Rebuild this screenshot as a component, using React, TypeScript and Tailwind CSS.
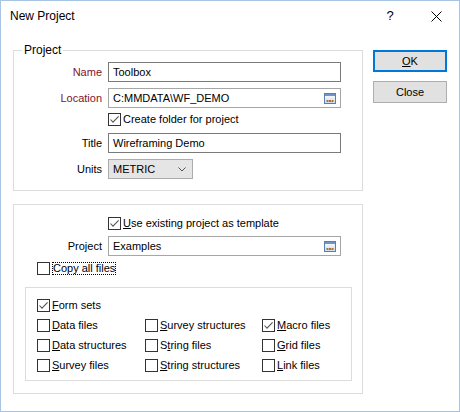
import type { ReactNode } from "react";

function CheckBox({ checked = false }: { checked?: boolean }) {
  return (
    <span className="flex h-[13px] w-[13px] shrink-0 items-center justify-center border border-[#333333] bg-white">
      {checked && (
        <svg width="11" height="11" viewBox="0 0 11 11">
          <path d="M1.5 5.5 L4 8.2 L9.6 2.3" stroke="#555555" strokeWidth="1.1" fill="none" />
        </svg>
      )}
    </span>
  );
}

function Check({ checked, children }: { checked?: boolean; children: ReactNode }) {
  return (
    <label className="flex h-[13px] items-center gap-[2px] leading-[13px] whitespace-nowrap">
      <CheckBox checked={checked} />
      <span>{children}</span>
    </label>
  );
}

function BrowseIcon() {
  return (
    <svg width="12" height="11" viewBox="0 0 12 11">
      <defs>
        <linearGradient id="bg" x1="0" y1="0" x2="0" y2="1">
          <stop offset="0" stopColor="#ffffff" />
          <stop offset="1" stopColor="#c9dcf0" />
        </linearGradient>
      </defs>
      <rect x="0.5" y="0.5" width="11" height="10" fill="url(#bg)" stroke="#5a7fae" />
      <rect x="1" y="1" width="10" height="2" fill="#6f95c6" />
      <rect x="2.5" y="7" width="2" height="2" fill="#b0732d" />
      <rect x="5" y="7" width="2" height="2" fill="#b0732d" />
      <rect x="7.5" y="7" width="2" height="2" fill="#b0732d" />
    </svg>
  );
}

function Field({
  label,
  required = false,
  children,
}: {
  label: string;
  required?: boolean;
  children: ReactNode;
}) {
  return (
    <div className="flex h-[20px] items-center">
      <span className={required ? "w-[88px] text-right text-[#80132a]" : "w-[88px] text-right text-black"}>
        {label}
      </span>
      <div className="ml-[6px]">{children}</div>
    </div>
  );
}

function TextBox({ value, browse = false }: { value: string; browse?: boolean }) {
  return (
    <div
      className={
        browse
          ? "flex h-[20px] w-[233px] items-center justify-between border border-[#a6a6a6] bg-white pl-[4px] pr-[4px]"
          : "flex h-[20px] w-[233px] items-center border border-[#7a7a7a] bg-white pl-[4px]"
      }
    >
      <span>{value}</span>
      {browse && <BrowseIcon />}
    </div>
  );
}

export default function App() {
  return (
    <div className="flex h-[412px] w-[460px] flex-col border border-[#a7c4e4] bg-white font-['Liberation_Sans',Arial,sans-serif] text-[11px] text-black">
      {/* title bar */}
      <div className="flex h-[30px] shrink-0 items-center">
        <span className="pl-[9px] text-[12px]">New Project</span>
        <div className="ml-auto flex h-full">
          <span className="flex w-[46px] items-center justify-center text-[13px]">?</span>
          <span className="flex w-[46px] items-center justify-center">
            <svg width="11" height="11" viewBox="0 0 11 11">
              <path d="M0.5 0.5 L10.5 10.5 M10.5 0.5 L0.5 10.5" stroke="#000" strokeWidth="1" />
            </svg>
          </span>
        </div>
      </div>

      <div className="mt-[19px] flex items-start pl-[12px]">
        <div className="flex w-[350px] flex-col">
          {/* project group */}
          <div className="relative flex flex-col border border-[#dcdcdc] pt-[11px] pb-[11px]">
            <span className="absolute -top-[8px] left-[8px] bg-white px-[2px] text-[12px] leading-[15px]">
              Project
            </span>
            <Field label="Name" required>
              <TextBox value="Toolbox" />
            </Field>
            <div className="mt-[6px]">
              <Field label="Location" required>
                <TextBox value="C:MMDATA\WF_DEMO" browse />
              </Field>
            </div>
            <div className="mt-[5px] pl-[94px]">
              <Check checked>Create folder for project</Check>
            </div>
            <div className="mt-[7px]">
              <Field label="Title">
                <TextBox value="Wireframing Demo" />
              </Field>
            </div>
            <div className="mt-[6px]">
              <Field label="Units">
                <div className="flex h-[20px] w-[85px] items-center justify-between border border-[#acacac] bg-[#e5e5e5] pl-[4px] pr-[6px]">
                  <span>METRIC</span>
                  <svg width="8" height="5" viewBox="0 0 8 5">
                    <path d="M0.5 0.5 L4 4 L7.5 0.5" stroke="#555" strokeWidth="1" fill="none" />
                  </svg>
                </div>
              </Field>
            </div>
          </div>

          {/* template group */}
          <div className="mt-[13px] flex flex-col border border-[#dcdcdc] pt-[12px] pb-[12px]">
            <div className="pl-[94px]">
              <Check checked>
                <u>U</u>se existing project as template
              </Check>
            </div>
            <div className="mt-[6px]">
              <Field label="Project">
                <TextBox value="Examples" browse />
              </Field>
            </div>
            <div className="mt-[6px] pl-[23px]">
              <label className="flex h-[13px] items-center gap-[2px] leading-[13px]">
                <CheckBox />
                <span className="border border-dotted border-black leading-[11px]">Copy all files</span>
              </label>
            </div>
            <div className="mt-[12px] mr-[10px] ml-[11px] border border-[#dcdcdc] pt-[7px] pb-[5px] pl-[11px]">
              <div className="grid auto-rows-[20px] grid-cols-[108px_117px_1fr] items-center">
                <Check checked>
                  <u>F</u>orm sets
                </Check>
                <span />
                <span />
                <Check>
                  <u>D</u>ata files
                </Check>
                <Check>
                  <u>S</u>urvey structures
                </Check>
                <Check checked>
                  <u>M</u>acro files
                </Check>
                <Check>
                  <u>D</u>ata structures
                </Check>
                <Check>
                  S<u>t</u>ring files
                </Check>
                <Check>
                  <u>G</u>rid files
                </Check>
                <Check>
                  <u>S</u>urvey files
                </Check>
                <Check>
                  <u>S</u>tring structures
                </Check>
                <Check>
                  <u>L</u>ink files
                </Check>
              </div>
            </div>
          </div>
        </div>

        {/* buttons */}
        <div className="ml-[10px] flex flex-col">
          <button className="h-[22px] w-[74px] border-2 border-[#0078d7] bg-[#e1e1e1] text-[11px]">
            <u>O</u>K
          </button>
          <button className="mt-[9px] h-[22px] w-[74px] border border-[#adadad] bg-[#e1e1e1] text-[11px]">
            Close
          </button>
        </div>
      </div>
    </div>
  );
}
